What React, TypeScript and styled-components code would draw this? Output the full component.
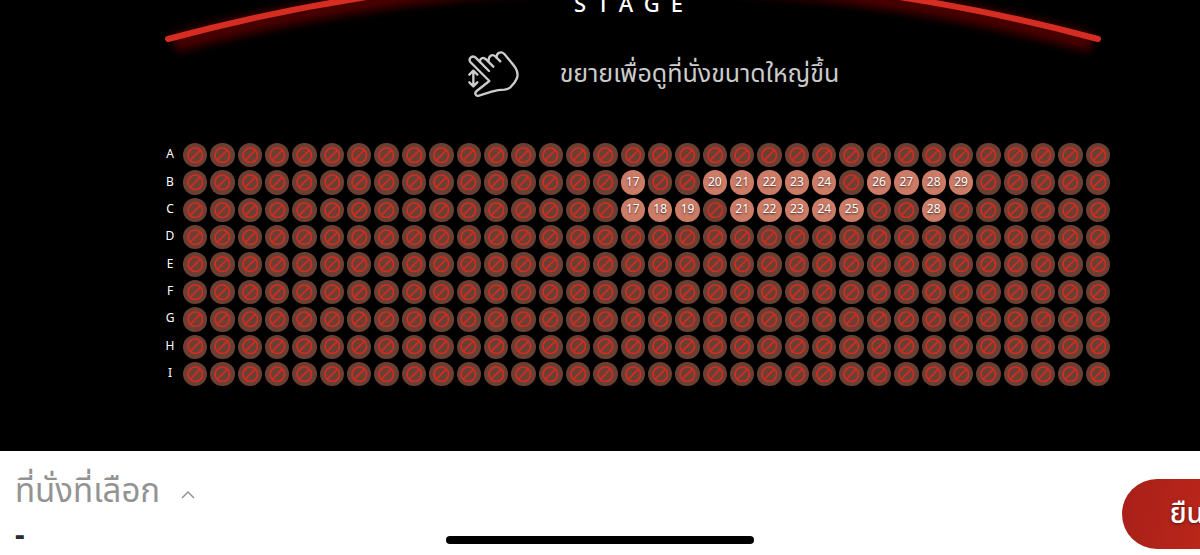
import React from "react";
import styled, { createGlobalStyle } from "styled-components";

const GlobalStyle = createGlobalStyle`
  * { box-sizing: border-box; }
  html, body { margin: 0; background: #fff; }
  body { overflow: hidden; font-family: "Noto Sans", "Noto Sans Thai", sans-serif; }
`;

const Page = styled.div`
  display: flex;
  flex-direction: column;
  min-height: 100vh;
  overflow: hidden;
`;

const Hall = styled.main`
  flex: 1;
  background: #000;
  color: #fff;
`;

const Stage = styled.header`
  position: relative;
  display: flow-root;
  height: 49px;
  padding-right: 5%;
  padding-left: 11%;
`;

const Arc = styled.svg`
  position: absolute;
  top: 0;
  left: 0;
  width: 100%;
  height: auto;
  overflow: hidden;
`;

const StageTitle = styled.h1`
  position: relative;
  margin: -13px 4px 0 0;
  font-size: 22px;
  line-height: 32px;
  font-weight: 500;
  letter-spacing: 11px;
  text-align: center;
`;

const Hint = styled.div`
  display: flex;
  align-items: center;
  justify-content: center;
  gap: 36px;
  height: 52px;
  padding-left: 98px;
  color: #ccc;
`;

const HintText = styled.p`
  margin: 0;
  padding-bottom: 6px;
  font-size: 25px;
  line-height: 36px;
  white-space: nowrap;
`;

const PinchSvg = styled.svg`
  flex: none;
  width: 65px;
  height: 60px;
`;

const Seats = styled.div`
  display: grid;
  gap: 3px;
  padding: 42px 90px 64px 160px;
`;

const Row = styled.div`
  display: grid;
  grid-template-columns: 20px repeat(34, minmax(0, 1fr));
  gap: 3px;
  align-items: center;
`;

const RowLabel = styled.span`
  padding-bottom: 2px;
  font-size: 12px;
  line-height: 16px;
  text-align: center;
`;

const Seat = styled.button<{ $free?: boolean }>`
  display: flex;
  align-items: center;
  justify-content: center;
  width: 100%;
  aspect-ratio: 1;
  padding: ${(p) => (p.$free ? "0 0 2px" : "0")};
  border: 0;
  border-radius: 50%;
  background: ${(p) => (p.$free ? "#cb7b66" : "#6b4034")};
  color: #fff;
  font-family: inherit;
  font-size: 12px;
  line-height: 16px;
  text-shadow: 0 1px 2px rgba(0, 0, 0, 0.7);
`;

const BanIcon = styled.svg`
  width: 68%;
  height: 68%;
`;

const Bar = styled.footer`
  position: relative;
  display: flex;
  align-items: flex-start;
  justify-content: space-between;
  height: 104px;
  padding-left: 15px;
  background: #fff;
`;

const Selection = styled.div`
  padding-top: 15px;
`;

const SelectionToggle = styled.button`
  display: flex;
  align-items: center;
  gap: 21px;
  padding: 0;
  border: 0;
  background: none;
  color: #939393;
  font-family: inherit;
  font-size: 33px;
  line-height: 48px;
`;

const Chevron = styled.svg`
  width: 14px;
  height: 9px;
  margin-top: 8px;
`;

const Chosen = styled.p`
  margin: 0;
  color: #2c2c30;
  font-size: 30px;
  line-height: 40px;
  font-weight: 700;
`;

const Confirm = styled.button`
  flex: none;
  width: 164px;
  height: 70px;
  margin: 28px -86px 0 0;
  padding: 0 0 4px;
  border: 0;
  border-radius: 35px;
  background: linear-gradient(100deg, #a81f18, #b9261a 50%, #a81f18);
  color: #fff;
  font-family: inherit;
  font-size: 28px;
  line-height: 36px;
  font-weight: 500;
  text-shadow: 0 1px 3px rgba(0, 0, 0, 0.5);
`;

const HomeIndicator = styled.div`
  position: absolute;
  bottom: 11px;
  left: 50%;
  width: 308px;
  height: 8px;
  border-radius: 4px;
  background: #000;
  transform: translateX(-50%);
`;

const rows = ["A", "B", "C", "D", "E", "F", "G", "H", "I"];
const seatNumbers = Array.from({ length: 34 }, (_, i) => i + 1);
const freeSeats: Record<string, number[]> = {
  B: [17, 20, 21, 22, 23, 24, 26, 27, 28, 29],
  C: [17, 18, 19, 21, 22, 23, 24, 25, 28],
};

function PinchIcon() {
  return (
    <PinchSvg viewBox="0 0 195 180" fill="none" stroke="#ccc" strokeWidth="7" strokeLinecap="round" strokeLinejoin="round" aria-hidden="true">
      <path d="M90 78 50 38C40 29 27 41 34 51L91 108 53 138C45 145 50 155 60 152L98 140Q118 134 136 134Q146 133 154 127Q169 113 174 99Q179 84 169 68Q162 58 136 27C126 17 112 24 113 37" />
      <path d="M63 51C62 40 73 35 81 43L103 65M89 47C88 33 100 26 109 34L124 49" />
      <path d="M43 78V123M31 89 43 77 55 89M31 112 43 124 55 112" />
    </PinchSvg>
  );
}

function Ban() {
  return (
    <BanIcon viewBox="0 0 16 16" fill="none" stroke="#d62b21" strokeWidth="1.6" aria-hidden="true">
      <circle cx="8" cy="8" r="7" />
      <path d="M3 13 13 3" />
    </BanIcon>
  );
}

export default function App() {
  return (
    <Page>
      <GlobalStyle />
      <Hall>
        <Stage>
          <Arc viewBox="0 0 1200 80" aria-hidden="true">
            <defs>
              <filter id="glow" filterUnits="userSpaceOnUse" x="100" y="-80" width="1060" height="180">
                <feGaussianBlur stdDeviation="5" />
              </filter>
            </defs>
            <path d="M174 43Q633 -80 1092 43" fill="none" stroke="#4c0000" strokeWidth="18" filter="url(#glow)" />
            <path d="M168 39Q633 -86 1098 39" fill="none" stroke="#d62d22" strokeWidth="6" strokeLinecap="round" />
          </Arc>
          <StageTitle>STAGE</StageTitle>
        </Stage>
        <Hint>
          <PinchIcon />
          <HintText>ขยายเพื่อดูที่นั่งขนาดใหญ่ขึ้น</HintText>
        </Hint>
        <Seats>
          {rows.map((row) => (
            <Row key={row}>
              <RowLabel>{row}</RowLabel>
              {seatNumbers.map((n) => {
                const free = freeSeats[row]?.includes(n);
                return (
                  <Seat key={n} type="button" $free={free} disabled={!free} aria-label={`${row}${n}`}>
                    {free ? n : <Ban />}
                  </Seat>
                );
              })}
            </Row>
          ))}
        </Seats>
      </Hall>
      <Bar>
        <Selection>
          <SelectionToggle type="button">
            ที่นั่งที่เลือก
            <Chevron viewBox="0 0 14 9" fill="none" stroke="#939393" strokeWidth="1.5" aria-hidden="true">
              <path d="M1 8 7 2 13 8" />
            </Chevron>
          </SelectionToggle>
          <Chosen>-</Chosen>
        </Selection>
        <Confirm type="button">ยืนยัน</Confirm>
        <HomeIndicator />
      </Bar>
    </Page>
  );
}
